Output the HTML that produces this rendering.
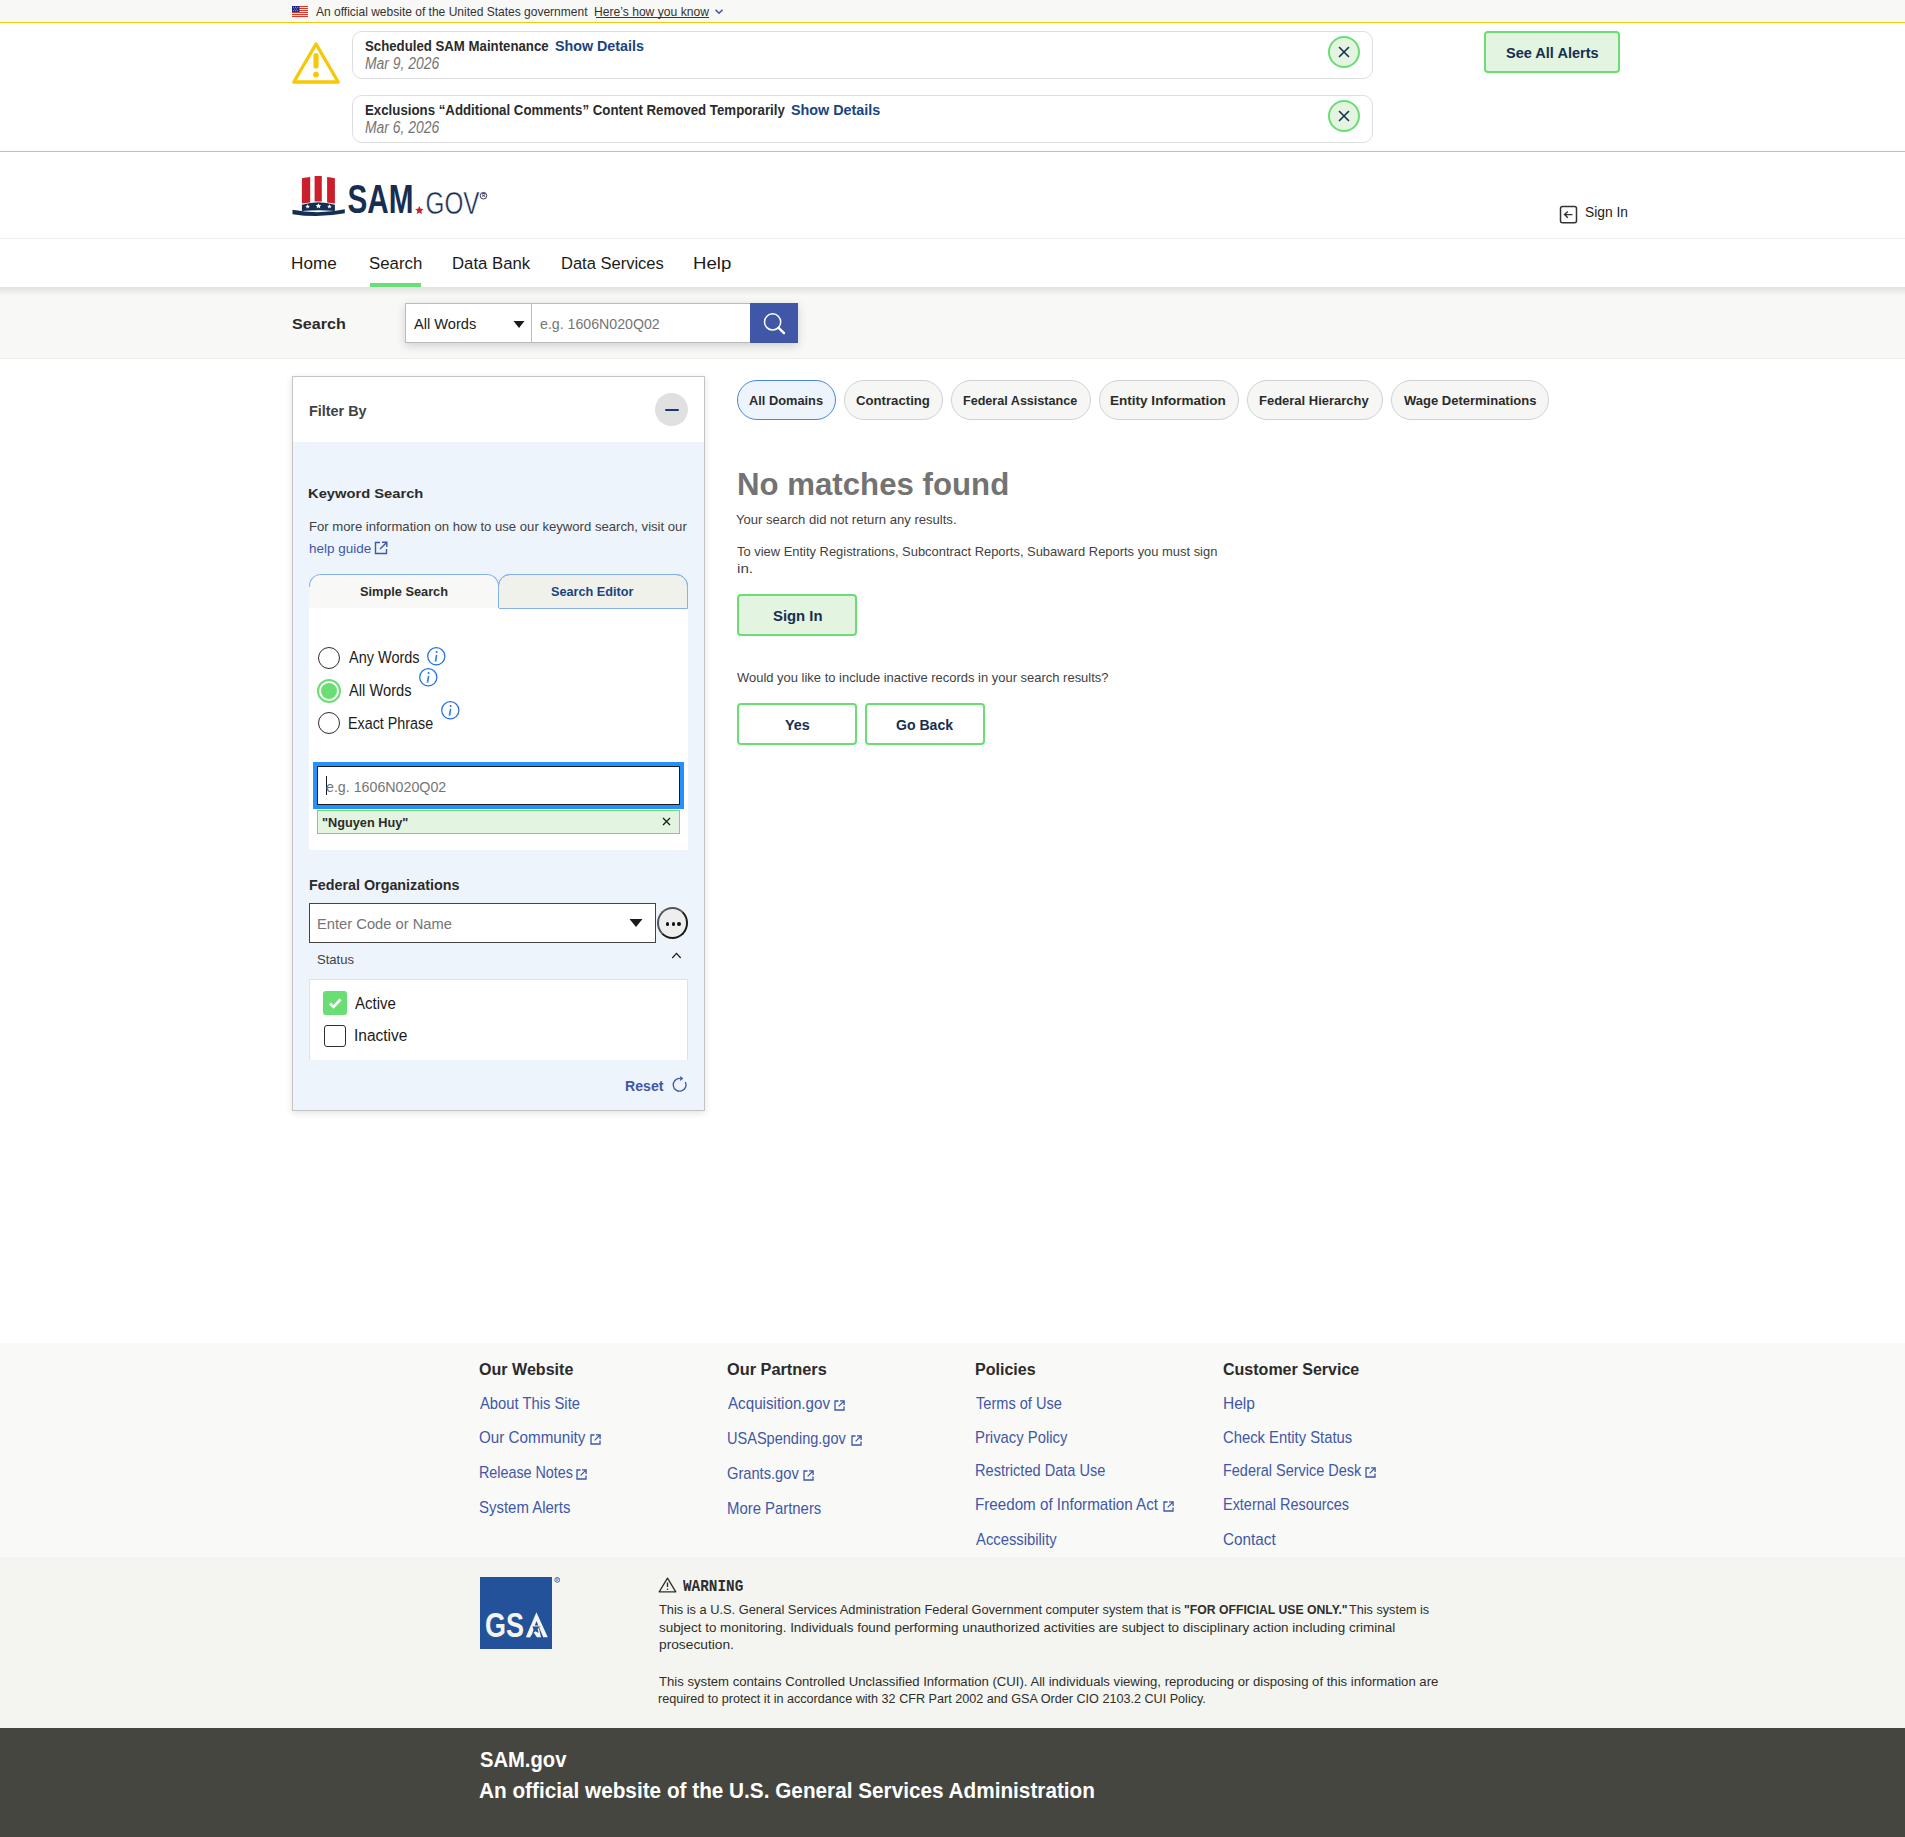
<!DOCTYPE html>
<html><head><meta charset="utf-8"><title>SAM.gov Search</title>
<style>
html,body{margin:0;padding:0}
body{width:1905px;height:1837px;position:relative;overflow:hidden;background:#fff;font-family:"Liberation Sans",sans-serif}
.t{position:absolute;line-height:1;white-space:nowrap;transform-origin:0 0}
.a{position:absolute;box-sizing:border-box}
svg{position:absolute;overflow:visible}
</style></head><body>
<!-- gov banner -->
<div class="a" style="left:0;top:0;width:1905px;height:22px;background:#f8f8f6"></div>
<div class="a" style="left:0;top:22px;width:1905px;height:1px;background:#f7c808"></div>
<svg style="left:292px;top:6px" width="16" height="11" viewBox="0 0 16 11">
  <rect width="16" height="11" fill="#fff"/>
  <g fill="#d8392b"><rect y="0" width="16" height="1.1"/><rect y="2" width="16" height="1.1"/><rect y="4" width="16" height="1.1"/><rect y="6" width="16" height="1.1"/><rect y="8" width="16" height="1.1"/><rect y="9.9" width="16" height="1.1"/></g>
  <rect width="7.5" height="6" fill="#1c2a8c"/>
  <g fill="#fff"><circle cx="1.5" cy="1.3" r=".45"/><circle cx="3.5" cy="1.3" r=".45"/><circle cx="5.5" cy="1.3" r=".45"/><circle cx="2.5" cy="3" r=".45"/><circle cx="4.5" cy="3" r=".45"/><circle cx="1.5" cy="4.7" r=".45"/><circle cx="3.5" cy="4.7" r=".45"/><circle cx="5.5" cy="4.7" r=".45"/></g>
</svg>
<div class="a" style="left:596px;top:17px;width:113px;height:1px;background:#3a3a3a"></div>
<svg style="left:714px;top:8px" width="10" height="7" viewBox="0 0 10 7"><path d="M1.5 1.8 L5 5.2 L8.5 1.8" fill="none" stroke="#3f57a6" stroke-width="1.6"/></svg>

<!-- alerts -->
<div class="a" style="left:0;top:151px;width:1905px;height:1px;background:#f7c808"></div>
<svg style="left:291px;top:41px" width="50" height="44" viewBox="0 0 50 44">
  <path d="M25 3 L47.2 41 L2.8 41 Z" fill="none" stroke="#f7c808" stroke-width="3.4" stroke-linejoin="round"/>
  <path d="M25 14.5 L25 25" stroke="#f7c808" stroke-width="5.2" stroke-linecap="round"/>
  <circle cx="25" cy="33.6" r="2.9" fill="#f7c808"/>
</svg>
<div class="a" style="left:352px;top:31px;width:1021px;height:48px;border:1px solid #dcdee0;border-radius:10px;background:#fff"></div>
<div class="a" style="left:352px;top:95px;width:1021px;height:48px;border:1px solid #dcdee0;border-radius:10px;background:#fff"></div>
<div class="a" style="left:1328px;top:36px;width:32px;height:32px;border:2px solid #6ade74;border-radius:50%;background:#e3f4e0"></div>
<div class="a" style="left:1328px;top:100px;width:32px;height:32px;border:2px solid #6ade74;border-radius:50%;background:#e3f4e0"></div>
<svg style="left:1338px;top:46px" width="12" height="12" viewBox="0 0 12 12"><path d="M1.5 1.5 L10.5 10.5 M10.5 1.5 L1.5 10.5" stroke="#162e51" stroke-width="1.6" stroke-linecap="round"/></svg>
<svg style="left:1338px;top:110px" width="12" height="12" viewBox="0 0 12 12"><path d="M1.5 1.5 L10.5 10.5 M10.5 1.5 L1.5 10.5" stroke="#162e51" stroke-width="1.6" stroke-linecap="round"/></svg>
<div class="a" style="left:1484px;top:31px;width:136px;height:42px;border:2px solid #6ade74;border-radius:4px;background:#e3f4e0"></div>

<!-- header -->
<div class="a" style="left:0;top:238px;width:1905px;height:1px;background:#efefea"></div>
<svg style="left:292px;top:176px" width="196" height="40" viewBox="0 0 196 40">
  <!-- hat stripes -->
  <path d="M9.9 2.3 Q14 1.2 18.2 0.9 L18.2 26.5 L9.9 27.5 Z" fill="#cc1f2c"/>
  <path d="M22.6 0 L29.8 0 L29.8 25.5 L22.6 25.5 Z" fill="#cc1f2c"/>
  <path d="M35.1 0.9 Q39 1.3 42.9 2.3 L42.9 27.5 L35.1 26.5 Z" fill="#cc1f2c"/>
  <!-- band -->
  <path d="M9.9 28.8 Q26.4 23.8 42.9 28.8 L42.9 35 Q26.4 33.5 9.9 35 Z" fill="#162e51"/>
  <g fill="#fff">
    <path d="M15.6 28.3 l.7 1.5 1.6.1-1.2 1 .4 1.6-1.5-.9-1.4.9.4-1.6-1.2-1 1.6-.1z"/>
    <path d="M26.4 27.2 l.9 1.8 2 .2-1.5 1.3.5 1.9-1.9-1.1-1.8 1.1.5-1.9-1.5-1.3 2-.2z"/>
    <path d="M37.4 28.3 l.7 1.5 1.6.1-1.2 1 .4 1.6-1.5-.9-1.4.9.4-1.6-1.2-1 1.6-.1z"/>
  </g>
  <!-- brim -->
  <path d="M0.5 33.8 Q26.5 39 52.8 33.3 L52.8 37.3 Q26.5 42.3 0.5 38.2 Z" fill="#162e51"/>
  <text x="55.5" y="37" font-family="Liberation Sans" font-weight="700" font-size="40" fill="#162e51" textLength="66" lengthAdjust="spacingAndGlyphs">SAM</text>
  <path d="M127.3 30 l1.3 2.8 3 .3-2.3 2 .7 3-2.7-1.6-2.6 1.6.7-3-2.3-2 3-.3z" fill="#cc1f2c"/>
  <text x="133.5" y="37.6" font-family="Liberation Sans" font-weight="400" font-size="31" fill="#162e51" stroke="#fff" stroke-width="0.45" textLength="54" lengthAdjust="spacingAndGlyphs">GOV</text>
  <circle cx="191.5" cy="19.7" r="3.3" fill="none" stroke="#162e51" stroke-width="0.9"/>
  <text x="189.9" y="21.3" font-family="Liberation Sans" font-size="4.6" font-weight="700" fill="#162e51">R</text>
</svg>
<svg style="left:1559px;top:205px" width="20" height="20" viewBox="0 0 20 20">
  <rect x="1.5" y="1.5" width="16" height="16.3" rx="2" fill="none" stroke="#333" stroke-width="1.5"/>
  <path d="M13.5 9.6 L5.5 9.6 M8.8 6.4 L5.5 9.6 L8.8 12.8" fill="none" stroke="#333" stroke-width="1.4"/>
</svg>

<!-- nav -->
<div class="a" style="left:370px;top:283px;width:51px;height:4px;background:#6ade74"></div>

<!-- search bar -->
<div class="a" style="left:0;top:287px;width:1905px;height:72px;background:#f8f8f6;border-bottom:1px solid #efefea"></div>
<div class="a" style="left:0;top:287px;width:1905px;height:9px;background:linear-gradient(rgba(0,0,0,.09),rgba(0,0,0,0))"></div>
<div class="a" style="left:405px;top:303px;width:393px;height:40px;box-shadow:0 3px 9px rgba(0,0,0,.16)"></div>
<div class="a" style="left:405px;top:303px;width:127px;height:40px;border:1px solid #b9bcbe;background:#fff"></div>
<div class="a" style="left:531px;top:303px;width:220px;height:40px;border:1px solid #b9bcbe;border-right:0;background:#fff"></div>
<svg style="left:513px;top:320px" width="12" height="9" viewBox="0 0 12 9"><path d="M0.5 1 L11.5 1 L6 8 Z" fill="#1b1b1b"/></svg>
<div class="a" style="left:750px;top:303px;width:48px;height:40px;background:#3f57a6"></div>
<svg style="left:763px;top:312px" width="24" height="24" viewBox="0 0 24 24"><circle cx="9.6" cy="9.9" r="8.1" fill="none" stroke="#fff" stroke-width="1.5"/><path d="M15.6 15.8 L21 21.2" stroke="#fff" stroke-width="2.4" stroke-linecap="round"/></svg>

<!-- filter panel -->
<div class="a" style="left:292px;top:376px;width:413px;height:735px;border:1px solid #c4c4c4;background:#eef4fb;box-shadow:0 2px 7px rgba(0,0,0,.12)"></div>
<div class="a" style="left:293px;top:377px;width:411px;height:65px;background:#fff"></div>
<div class="a" style="left:655px;top:393px;width:33px;height:33px;border-radius:50%;background:#e0e0e0"></div>
<div class="a" style="left:665px;top:409px;width:14px;height:2px;background:#1a3b6e;border-radius:1px"></div>
<svg style="left:374px;top:541px" width="14" height="14" viewBox="0 0 14 14"><path d="M6 1.5 L1.5 1.5 L1.5 12.5 L12.5 12.5 L12.5 8" fill="none" stroke="#3f57a6" stroke-width="1.4"/><path d="M8 1.2 L12.8 1.2 L12.8 6 M12.6 1.4 L6 8" fill="none" stroke="#3f57a6" stroke-width="1.4"/></svg>
<div class="a" style="left:309px;top:574px;width:190px;height:35px;border:1px solid #84b2f0;border-bottom:0;border-radius:12px 12px 0 0;background:#f8f8f6"></div>
<div class="a" style="left:498px;top:574px;width:190px;height:35px;border:1px solid #84b2f0;border-radius:12px 12px 0 0;background:#f1f1ec"></div>
<div class="a" style="left:309px;top:608px;width:379px;height:242px;background:#fff"></div>
<div class="a" style="left:498px;top:574px;width:190px;height:35px;border:1px solid #84b2f0;border-radius:12px 12px 0 0;background:transparent"></div>
<div class="a" style="left:309px;top:608px;width:190px;height:1px;background:#fff"></div>
<div class="a" style="left:309px;top:587px;width:1px;height:21px;background:#f8f8f6"></div>
<!-- radios -->
<div class="a" style="left:318px;top:647px;width:22px;height:22px;border:1.6px solid #2e2e2e;border-radius:50%;background:#fff"></div>
<div class="a" style="left:317px;top:679px;width:24px;height:24px;border:2px solid #6ade74;border-radius:50%;background:#fff"></div>
<div class="a" style="left:321px;top:683px;width:16px;height:16px;border-radius:50%;background:#6ade74"></div>
<div class="a" style="left:318px;top:712px;width:22px;height:22px;border:1.6px solid #2e2e2e;border-radius:50%;background:#fff"></div>
<svg style="left:427px;top:647px" width="19" height="19" viewBox="0 0 19 19"><circle cx="9.3" cy="9.3" r="8.6" fill="none" stroke="#2672de" stroke-width="1.25"/><circle cx="9.55" cy="5.1" r="1" fill="#2672de"/><path d="M9.6 7.9 L8.7 13.7" stroke="#2672de" stroke-width="1.5"/><path d="M7.6 14 L9.4 14" stroke="#2672de" stroke-width="1.1"/></svg>
<svg style="left:418.8px;top:667.8px" width="19" height="19" viewBox="0 0 19 19"><circle cx="9.3" cy="9.3" r="8.6" fill="none" stroke="#2672de" stroke-width="1.25"/><circle cx="9.55" cy="5.1" r="1" fill="#2672de"/><path d="M9.6 7.9 L8.7 13.7" stroke="#2672de" stroke-width="1.5"/><path d="M7.6 14 L9.4 14" stroke="#2672de" stroke-width="1.1"/></svg>
<svg style="left:441px;top:701px" width="19" height="19" viewBox="0 0 19 19"><circle cx="9.3" cy="9.3" r="8.6" fill="none" stroke="#2672de" stroke-width="1.25"/><circle cx="9.55" cy="5.1" r="1" fill="#2672de"/><path d="M9.6 7.9 L8.7 13.7" stroke="#2672de" stroke-width="1.5"/><path d="M7.6 14 L9.4 14" stroke="#2672de" stroke-width="1.1"/></svg>
<!-- focused input -->
<div class="a" style="left:313px;top:762px;width:371px;height:47px;background:#2491ff"></div>
<div class="a" style="left:317px;top:766px;width:363px;height:39px;border:1.5px solid #1b1b1b;background:#fff"></div>
<div class="a" style="left:326px;top:776px;width:1px;height:19px;background:#1b1b1b"></div>
<div class="a" style="left:317px;top:810px;width:363px;height:24px;border:1px solid #6ade74;background:#e3f4e0"></div>
<svg style="left:662px;top:817px" width="9" height="9" viewBox="0 0 9 9"><path d="M1 1 L8 8 M8 1 L1 8" stroke="#1b1b1b" stroke-width="1.3"/></svg>
<!-- federal orgs -->
<div class="a" style="left:309px;top:903px;width:347px;height:40px;border:1.5px solid #444;background:#fff"></div>
<svg style="left:629px;top:918px" width="14" height="10" viewBox="0 0 14 10"><path d="M0.5 1 L13.5 1 L7 9 Z" fill="#1b1b1b"/></svg>
<div class="a" style="left:657px;top:907px;width:31px;height:32px;border:2px solid #1b1b1b;border-left-color:#555;border-top-color:#555;border-radius:50%;background:#eeeeee"></div>
<div class="a" style="left:665.6px;top:922.2px;width:3.8px;height:3.8px;border-radius:50%;background:#111"></div>
<div class="a" style="left:671.5px;top:922.2px;width:3.8px;height:3.8px;border-radius:50%;background:#111"></div>
<div class="a" style="left:677.3px;top:922.2px;width:3.8px;height:3.8px;border-radius:50%;background:#111"></div>
<svg style="left:670px;top:950px" width="13" height="10" viewBox="0 0 13 10"><path d="M2.3 8 L6.5 3.3 L10.7 8" fill="none" stroke="#1b1b1b" stroke-width="1.2"/></svg>
<div class="a" style="left:309px;top:979px;width:379px;height:81px;border:1px solid #dfe1e2;border-bottom:0;background:#fff"></div>
<div class="a" style="left:323px;top:991px;width:24px;height:24px;border-radius:3px;background:#6ade74"></div>
<svg style="left:323px;top:991px" width="24" height="24" viewBox="0 0 24 24"><path d="M7 12.5 L10.5 16 L17.5 8.5" fill="none" stroke="#fff" stroke-width="2.6"/></svg>
<div class="a" style="left:324px;top:1025px;width:22px;height:22px;border:1.5px solid #2e2e2e;border-radius:3px;background:#fff"></div>
<svg style="left:671px;top:1075px" width="17" height="17" viewBox="0 0 17 17"><path d="M14.4 7.0 A6.4 6.4 0 1 1 8.9 3.4" fill="none" stroke="#3f57a6" stroke-width="1.3"/><path d="M9.2 0.9 L9.2 6.0 L12.3 3.5 Z" fill="#3f57a6"/></svg>

<!-- pills -->
<div class="a" style="left:737px;top:380px;width:99px;height:40px;border:1px solid #4a86d8;border-radius:20px;background:#edf4fb"></div>
<div class="a" style="left:844px;top:380px;width:99px;height:40px;border:1px solid #d0d2d3;border-radius:20px;background:#f6f6f4"></div>
<div class="a" style="left:951px;top:380px;width:140px;height:40px;border:1px solid #d0d2d3;border-radius:20px;background:#f6f6f4"></div>
<div class="a" style="left:1099px;top:380px;width:140px;height:40px;border:1px solid #d0d2d3;border-radius:20px;background:#f6f6f4"></div>
<div class="a" style="left:1247px;top:380px;width:136px;height:40px;border:1px solid #d0d2d3;border-radius:20px;background:#f6f6f4"></div>
<div class="a" style="left:1391px;top:380px;width:158px;height:40px;border:1px solid #d0d2d3;border-radius:20px;background:#f6f6f4"></div>
<!-- buttons -->
<div class="a" style="left:737px;top:594px;width:120px;height:42px;border:2px solid #6ade74;border-radius:4px;background:#e3f4e0"></div>
<div class="a" style="left:737px;top:703px;width:120px;height:42px;border:2px solid #6ade74;border-radius:4px;background:#fff"></div>
<div class="a" style="left:865px;top:703px;width:120px;height:42px;border:2px solid #6ade74;border-radius:4px;background:#fff"></div>

<!-- footer -->
<div class="a" style="left:0;top:1343px;width:1905px;height:214px;background:#f9f9f7"></div>
<div class="a" style="left:0;top:1557px;width:1905px;height:171px;background:#f4f5f0"></div>
<div class="a" style="left:0;top:1728px;width:1905px;height:109px;background:#45463f"></div>

<!-- footer icons -->
<svg style="left:590.2px;top:1433.7px" width="11" height="11" viewBox="0 0 11 11"><path d="M4.5 1 L1 1 L1 10 L10 10 L10 6.5" fill="none" stroke="#3f57a6" stroke-width="1.3"/><path d="M6 0.9 L10.1 0.9 L10.1 5 M9.9 1.1 L4.6 6.4" fill="none" stroke="#3f57a6" stroke-width="1.3"/></svg>
<svg style="left:576.3px;top:1468.5px" width="11" height="11" viewBox="0 0 11 11"><path d="M4.5 1 L1 1 L1 10 L10 10 L10 6.5" fill="none" stroke="#3f57a6" stroke-width="1.3"/><path d="M6 0.9 L10.1 0.9 L10.1 5 M9.9 1.1 L4.6 6.4" fill="none" stroke="#3f57a6" stroke-width="1.3"/></svg>
<svg style="left:834.3px;top:1400.1px" width="11" height="11" viewBox="0 0 11 11"><path d="M4.5 1 L1 1 L1 10 L10 10 L10 6.5" fill="none" stroke="#3f57a6" stroke-width="1.3"/><path d="M6 0.9 L10.1 0.9 L10.1 5 M9.9 1.1 L4.6 6.4" fill="none" stroke="#3f57a6" stroke-width="1.3"/></svg>
<svg style="left:851.0px;top:1434.5px" width="11" height="11" viewBox="0 0 11 11"><path d="M4.5 1 L1 1 L1 10 L10 10 L10 6.5" fill="none" stroke="#3f57a6" stroke-width="1.3"/><path d="M6 0.9 L10.1 0.9 L10.1 5 M9.9 1.1 L4.6 6.4" fill="none" stroke="#3f57a6" stroke-width="1.3"/></svg>
<svg style="left:803.4px;top:1469.5px" width="11" height="11" viewBox="0 0 11 11"><path d="M4.5 1 L1 1 L1 10 L10 10 L10 6.5" fill="none" stroke="#3f57a6" stroke-width="1.3"/><path d="M6 0.9 L10.1 0.9 L10.1 5 M9.9 1.1 L4.6 6.4" fill="none" stroke="#3f57a6" stroke-width="1.3"/></svg>
<svg style="left:1162.9px;top:1500.6px" width="11" height="11" viewBox="0 0 11 11"><path d="M4.5 1 L1 1 L1 10 L10 10 L10 6.5" fill="none" stroke="#3f57a6" stroke-width="1.3"/><path d="M6 0.9 L10.1 0.9 L10.1 5 M9.9 1.1 L4.6 6.4" fill="none" stroke="#3f57a6" stroke-width="1.3"/></svg>
<svg style="left:1364.8px;top:1467.0px" width="11" height="11" viewBox="0 0 11 11"><path d="M4.5 1 L1 1 L1 10 L10 10 L10 6.5" fill="none" stroke="#3f57a6" stroke-width="1.3"/><path d="M6 0.9 L10.1 0.9 L10.1 5 M9.9 1.1 L4.6 6.4" fill="none" stroke="#3f57a6" stroke-width="1.3"/></svg>
<svg style="left:480px;top:1577px" width="82" height="73" viewBox="0 0 82 73">
  <rect x="0" y="0" width="72" height="72" fill="#23519a"/>
  <text x="5" y="60.3" font-family="Liberation Sans" font-weight="700" font-size="34.5" fill="#f5f5f0" textLength="39" lengthAdjust="spacingAndGlyphs">GS</text>
  <path d="M45.8 60.3 L56.4 35.3 L67.8 60.3 L63.2 60.3 L56.5 44 L50.3 60.3 Z" fill="#f5f5f0"/>
  <path d="M51 48.5 L62 48.5 L59 51.5 L61 60.3 L57 60.3 L53.5 55.5 L49.5 60.3 L47.5 60.3 Z" fill="#f5f5f0"/>
  <path d="M52.3 49.6 L60.6 49.6 L57.6 52 L58.6 56 L55.5 54.2 L52 57 L53.6 52.6 Z" fill="#23519a"/>
  <circle cx="77.2" cy="2.9" r="2.5" fill="none" stroke="#23519a" stroke-width=".7"/>
  <path d="M76.3 4.6 L76.3 1.3 L77.6 1.3 Q78.6 1.4 78.4 2.4 Q78.2 3 77.3 3 L78.3 4.6" fill="none" stroke="#23519a" stroke-width=".55"/>
</svg>
<svg style="left:658px;top:1577px" width="19" height="16" viewBox="0 0 19 16">
  <path d="M9.5 1.2 L17.8 14.8 L1.2 14.8 Z" fill="none" stroke="#2e2e2e" stroke-width="1.3" stroke-linejoin="round"/>
  <path d="M9.5 5.5 L9.5 10" stroke="#2e2e2e" stroke-width="1.4"/><circle cx="9.5" cy="12.2" r=".8" fill="#2e2e2e"/>
</svg>
<div class="t" id="t0" style="left:316.00px;top:6.00px;font-size:12.46px;font-weight:400;color:#333333;font-family:'Liberation Sans', sans-serif;transform:scaleX(0.9644);">An official website of the United States government</div>
<div class="t" id="t1" style="left:594.23px;top:6.00px;font-size:12.46px;font-weight:400;color:#333333;font-family:'Liberation Sans', sans-serif;transform:scaleX(0.9727);">Here’s how you know</div>
<div class="t" id="t2" style="left:364.74px;top:38.00px;font-size:15.36px;font-weight:700;color:#2b2b2b;font-family:'Liberation Sans', sans-serif;transform:scaleX(0.8604);">Scheduled SAM Maintenance</div>
<div class="t" id="t3" style="left:555.27px;top:38.00px;font-size:15.36px;font-weight:700;color:#1a4480;font-family:'Liberation Sans', sans-serif;transform:scaleX(0.9298);">Show Details</div>
<div class="t" id="t4" style="left:364.73px;top:56.00px;font-size:15.94px;font-weight:400;color:#757575;font-family:'Liberation Sans', sans-serif;transform:scaleX(0.8738);font-style:italic;">Mar 9, 2026</div>
<div class="t" id="t5" style="left:364.74px;top:102.00px;font-size:15.36px;font-weight:700;color:#2b2b2b;font-family:'Liberation Sans', sans-serif;transform:scaleX(0.8635);">Exclusions “Additional Comments” Content Removed Temporarily</div>
<div class="t" id="t6" style="left:791.07px;top:102.00px;font-size:15.36px;font-weight:700;color:#1a4480;font-family:'Liberation Sans', sans-serif;transform:scaleX(0.9340);">Show Details</div>
<div class="t" id="t7" style="left:364.73px;top:120.00px;font-size:15.94px;font-weight:400;color:#757575;font-family:'Liberation Sans', sans-serif;transform:scaleX(0.8738);font-style:italic;">Mar 6, 2026</div>
<div class="t" id="t8" style="left:1505.97px;top:46.00px;font-size:14.06px;font-weight:700;color:#162e51;font-family:'Liberation Sans', sans-serif;transform:scaleX(1.0341);">See All Alerts</div>
<div class="t" id="t9" style="left:1585.28px;top:204.00px;font-size:15.07px;font-weight:400;color:#1b1b1b;font-family:'Liberation Sans', sans-serif;transform:scaleX(0.9156);">Sign In</div>
<div class="t" id="t10" style="left:291.36px;top:256.00px;font-size:16.52px;font-weight:400;color:#1b1b1b;font-family:'Liberation Sans', sans-serif;transform:scaleX(1.0384);">Home</div>
<div class="t" id="t11" style="left:368.98px;top:256.00px;font-size:16.52px;font-weight:400;color:#1b1b1b;font-family:'Liberation Sans', sans-serif;transform:scaleX(1.0200);">Search</div>
<div class="t" id="t12" style="left:451.99px;top:256.00px;font-size:16.52px;font-weight:400;color:#1b1b1b;font-family:'Liberation Sans', sans-serif;transform:scaleX(1.0132);">Data Bank</div>
<div class="t" id="t13" style="left:561.00px;top:256.00px;font-size:16.52px;font-weight:400;color:#1b1b1b;font-family:'Liberation Sans', sans-serif;transform:scaleX(1.0000);">Data Services</div>
<div class="t" id="t14" style="left:692.88px;top:256.00px;font-size:16.52px;font-weight:400;color:#1b1b1b;font-family:'Liberation Sans', sans-serif;transform:scaleX(1.1250);">Help</div>
<div class="t" id="t15" style="left:291.95px;top:316.00px;font-size:15.36px;font-weight:700;color:#2b2b2b;font-family:'Liberation Sans', sans-serif;transform:scaleX(1.0492);">Search</div>
<div class="t" id="t16" style="left:414.20px;top:317.00px;font-size:14.06px;font-weight:400;color:#1b1b1b;font-family:'Liberation Sans', sans-serif;transform:scaleX(1.0409);">All Words</div>
<div class="t" id="t17" style="left:539.99px;top:317.00px;font-size:14.06px;font-weight:400;color:#757575;font-family:'Liberation Sans', sans-serif;transform:scaleX(1.0085);">e.g. 1606N020Q02</div>
<div class="t" id="t18" style="left:308.64px;top:403.00px;font-size:15.07px;font-weight:700;color:#404244;font-family:'Liberation Sans', sans-serif;transform:scaleX(0.9559);">Filter By</div>
<div class="t" id="t19" style="left:308.48px;top:487.00px;font-size:13.19px;font-weight:700;color:#2b2b2b;font-family:'Liberation Sans', sans-serif;transform:scaleX(1.1157);">Keyword Search</div>
<div class="t" id="t20" style="left:308.64px;top:520.00px;font-size:13.62px;font-weight:400;color:#404244;font-family:'Liberation Sans', sans-serif;transform:scaleX(0.9642);">For more information on how to use our keyword search, visit our</div>
<div class="t" id="t21" style="left:308.61px;top:542.00px;font-size:13.62px;font-weight:400;color:#3f57a6;font-family:'Liberation Sans', sans-serif;transform:scaleX(0.9902);">help guide</div>
<div class="t" id="t22" style="left:359.63px;top:585.00px;font-size:13.19px;font-weight:700;color:#2b2b2b;font-family:'Liberation Sans', sans-serif;transform:scaleX(0.9685);">Simple Search</div>
<div class="t" id="t23" style="left:551.04px;top:585.00px;font-size:13.19px;font-weight:700;color:#1a4480;font-family:'Liberation Sans', sans-serif;transform:scaleX(0.9624);">Search Editor</div>
<div class="t" id="t24" style="left:349.00px;top:650.00px;font-size:15.94px;font-weight:400;color:#1b1b1b;font-family:'Liberation Sans', sans-serif;transform:scaleX(0.9091);">Any Words</div>
<div class="t" id="t25" style="left:349.00px;top:683.00px;font-size:15.94px;font-weight:400;color:#1b1b1b;font-family:'Liberation Sans', sans-serif;transform:scaleX(0.9207);">All Words</div>
<div class="t" id="t26" style="left:348.10px;top:716.00px;font-size:15.94px;font-weight:400;color:#1b1b1b;font-family:'Liberation Sans', sans-serif;transform:scaleX(0.8989);">Exact Phrase</div>
<div class="t" id="t27" style="left:326.06px;top:779.00px;font-size:15.07px;font-weight:400;color:#757575;font-family:'Liberation Sans', sans-serif;transform:scaleX(0.9445);">e.g. 1606N020Q02</div>
<div class="t" id="t28" style="left:322.04px;top:816.00px;font-size:13.33px;font-weight:700;color:#2b2b2b;font-family:'Liberation Sans', sans-serif;transform:scaleX(0.9551);">"Nguyen Huy"</div>
<div class="t" id="t29" style="left:308.59px;top:878.00px;font-size:14.20px;font-weight:700;color:#2b2b2b;font-family:'Liberation Sans', sans-serif;transform:scaleX(1.0096);">Federal Organizations</div>
<div class="t" id="t30" style="left:317.04px;top:916.00px;font-size:15.36px;font-weight:400;color:#757575;font-family:'Liberation Sans', sans-serif;transform:scaleX(0.9583);">Enter Code or Name</div>
<div class="t" id="t31" style="left:316.81px;top:953.00px;font-size:13.19px;font-weight:400;color:#404244;font-family:'Liberation Sans', sans-serif;transform:scaleX(0.9889);">Status</div>
<div class="t" id="t32" style="left:355.00px;top:996.00px;font-size:15.80px;font-weight:400;color:#1b1b1b;font-family:'Liberation Sans', sans-serif;transform:scaleX(0.9524);">Active</div>
<div class="t" id="t33" style="left:354.02px;top:1028.00px;font-size:15.80px;font-weight:400;color:#1b1b1b;font-family:'Liberation Sans', sans-serif;transform:scaleX(0.9811);">Inactive</div>
<div class="t" id="t34" style="left:624.62px;top:1079.00px;font-size:14.35px;font-weight:700;color:#3f57a6;font-family:'Liberation Sans', sans-serif;transform:scaleX(0.9846);">Reset</div>
<div class="t" id="t35" style="left:749.00px;top:394.00px;font-size:13.62px;font-weight:700;color:#2b2b2b;font-family:'Liberation Sans', sans-serif;transform:scaleX(0.9411);">All Domains</div>
<div class="t" id="t36" style="left:856.23px;top:394.00px;font-size:13.62px;font-weight:700;color:#2b2b2b;font-family:'Liberation Sans', sans-serif;transform:scaleX(0.9680);">Contracting</div>
<div class="t" id="t37" style="left:963.48px;top:394.00px;font-size:13.62px;font-weight:700;color:#2b2b2b;font-family:'Liberation Sans', sans-serif;transform:scaleX(0.9246);">Federal Assistance</div>
<div class="t" id="t38" style="left:1110.01px;top:394.00px;font-size:13.62px;font-weight:700;color:#2b2b2b;font-family:'Liberation Sans', sans-serif;transform:scaleX(0.9948);">Entity Information</div>
<div class="t" id="t39" style="left:1259.25px;top:394.00px;font-size:13.62px;font-weight:700;color:#2b2b2b;font-family:'Liberation Sans', sans-serif;transform:scaleX(0.9544);">Federal Hierarchy</div>
<div class="t" id="t40" style="left:1403.80px;top:394.00px;font-size:13.62px;font-weight:700;color:#2b2b2b;font-family:'Liberation Sans', sans-serif;transform:scaleX(0.9551);">Wage Determinations</div>
<div class="t" id="t41" style="left:737.01px;top:469.00px;font-size:31.45px;font-weight:700;color:#737373;font-family:'Liberation Sans', sans-serif;transform:scaleX(0.9926);">No matches found</div>
<div class="t" id="t42" style="left:736.00px;top:513.00px;font-size:13.04px;font-weight:400;color:#404244;font-family:'Liberation Sans', sans-serif;transform:scaleX(1.0037);">Your search did not return any results.</div>
<div class="t" id="t43" style="left:737.00px;top:545.00px;font-size:13.04px;font-weight:400;color:#404244;font-family:'Liberation Sans', sans-serif;transform:scaleX(0.9913);">To view Entity Registrations, Subcontract Reports, Subaward Reports you must sign</div>
<div class="t" id="t44" style="left:736.83px;top:562.00px;font-size:13.04px;font-weight:400;color:#404244;font-family:'Liberation Sans', sans-serif;transform:scaleX(1.1683);">in.</div>
<div class="t" id="t45" style="left:772.63px;top:608.00px;font-size:15.36px;font-weight:700;color:#162e51;font-family:'Liberation Sans', sans-serif;transform:scaleX(0.9674);">Sign In</div>
<div class="t" id="t46" style="left:737.00px;top:671.00px;font-size:13.04px;font-weight:400;color:#404244;font-family:'Liberation Sans', sans-serif;transform:scaleX(0.9946);">Would you like to include inactive records in your search results?</div>
<div class="t" id="t47" style="left:785.06px;top:717.00px;font-size:15.36px;font-weight:700;color:#162e51;font-family:'Liberation Sans', sans-serif;transform:scaleX(0.9369);">Yes</div>
<div class="t" id="t48" style="left:896.09px;top:717.00px;font-size:15.36px;font-weight:700;color:#162e51;font-family:'Liberation Sans', sans-serif;transform:scaleX(0.9148);">Go Back</div>
<div class="t" id="t49" style="left:479.03px;top:1362.00px;font-size:16.52px;font-weight:700;color:#2b2b2b;font-family:'Liberation Sans', sans-serif;transform:scaleX(0.9729);">Our Website</div>
<div class="t" id="t50" style="left:727.01px;top:1362.00px;font-size:16.52px;font-weight:700;color:#2b2b2b;font-family:'Liberation Sans', sans-serif;transform:scaleX(0.9879);">Our Partners</div>
<div class="t" id="t51" style="left:975.03px;top:1362.00px;font-size:16.52px;font-weight:700;color:#2b2b2b;font-family:'Liberation Sans', sans-serif;transform:scaleX(0.9705);">Policies</div>
<div class="t" id="t52" style="left:1223.03px;top:1362.00px;font-size:16.52px;font-weight:700;color:#2b2b2b;font-family:'Liberation Sans', sans-serif;transform:scaleX(0.9698);">Customer Service</div>
<div class="t" id="t53" style="left:480.00px;top:1395.00px;font-size:16.38px;font-weight:400;color:#3f57a6;font-family:'Liberation Sans', sans-serif;transform:scaleX(0.9036);">About This Site</div>
<div class="t" id="t54" style="left:479.07px;top:1429.00px;font-size:16.38px;font-weight:400;color:#3f57a6;font-family:'Liberation Sans', sans-serif;transform:scaleX(0.9292);">Our Community</div>
<div class="t" id="t55" style="left:479.12px;top:1464.00px;font-size:16.38px;font-weight:400;color:#3f57a6;font-family:'Liberation Sans', sans-serif;transform:scaleX(0.8755);">Release Notes</div>
<div class="t" id="t56" style="left:479.09px;top:1499.00px;font-size:16.38px;font-weight:400;color:#3f57a6;font-family:'Liberation Sans', sans-serif;transform:scaleX(0.9143);">System Alerts</div>
<div class="t" id="t57" style="left:728.00px;top:1395.00px;font-size:16.38px;font-weight:400;color:#3f57a6;font-family:'Liberation Sans', sans-serif;transform:scaleX(0.9273);">Acquisition.gov</div>
<div class="t" id="t58" style="left:727.11px;top:1430.00px;font-size:16.38px;font-weight:400;color:#3f57a6;font-family:'Liberation Sans', sans-serif;transform:scaleX(0.8887);">USASpending.gov</div>
<div class="t" id="t59" style="left:727.10px;top:1465.00px;font-size:16.38px;font-weight:400;color:#3f57a6;font-family:'Liberation Sans', sans-serif;transform:scaleX(0.8962);">Grants.gov</div>
<div class="t" id="t60" style="left:727.09px;top:1500.00px;font-size:16.38px;font-weight:400;color:#3f57a6;font-family:'Liberation Sans', sans-serif;transform:scaleX(0.9098);">More Partners</div>
<div class="t" id="t61" style="left:976.00px;top:1395.00px;font-size:16.38px;font-weight:400;color:#3f57a6;font-family:'Liberation Sans', sans-serif;transform:scaleX(0.8917);">Terms of Use</div>
<div class="t" id="t62" style="left:975.09px;top:1429.00px;font-size:16.38px;font-weight:400;color:#3f57a6;font-family:'Liberation Sans', sans-serif;transform:scaleX(0.9069);">Privacy Policy</div>
<div class="t" id="t63" style="left:975.11px;top:1462.00px;font-size:16.38px;font-weight:400;color:#3f57a6;font-family:'Liberation Sans', sans-serif;transform:scaleX(0.8911);">Restricted Data Use</div>
<div class="t" id="t64" style="left:975.07px;top:1496.00px;font-size:16.38px;font-weight:400;color:#3f57a6;font-family:'Liberation Sans', sans-serif;transform:scaleX(0.9276);">Freedom of Information Act</div>
<div class="t" id="t65" style="left:976.00px;top:1531.00px;font-size:16.38px;font-weight:400;color:#3f57a6;font-family:'Liberation Sans', sans-serif;transform:scaleX(0.9056);">Accessibility</div>
<div class="t" id="t66" style="left:1223.05px;top:1395.00px;font-size:16.38px;font-weight:400;color:#3f57a6;font-family:'Liberation Sans', sans-serif;transform:scaleX(0.9500);">Help</div>
<div class="t" id="t67" style="left:1223.10px;top:1429.00px;font-size:16.38px;font-weight:400;color:#3f57a6;font-family:'Liberation Sans', sans-serif;transform:scaleX(0.9050);">Check Entity Status</div>
<div class="t" id="t68" style="left:1223.12px;top:1462.00px;font-size:16.38px;font-weight:400;color:#3f57a6;font-family:'Liberation Sans', sans-serif;transform:scaleX(0.8839);">Federal Service Desk</div>
<div class="t" id="t69" style="left:1223.12px;top:1496.00px;font-size:16.38px;font-weight:400;color:#3f57a6;font-family:'Liberation Sans', sans-serif;transform:scaleX(0.8823);">External Resources</div>
<div class="t" id="t70" style="left:1223.07px;top:1531.00px;font-size:16.38px;font-weight:400;color:#3f57a6;font-family:'Liberation Sans', sans-serif;transform:scaleX(0.9346);">Contact</div>
<div class="t" id="t71" style="left:683.40px;top:1580.00px;font-size:15.76px;font-weight:700;color:#2e2e2e;font-family:'Liberation Mono', monospace;transform:scaleX(0.9122);">WARNING</div>
<div class="t" id="t72" style="left:659.00px;top:1603.00px;font-size:13.04px;font-weight:400;color:#2e2e2a;font-family:'Liberation Sans', sans-serif;transform:scaleX(0.9830);">This is a U.S. General Services Administration Federal Government computer system that is</div>
<div class="t" id="t73" style="left:1183.86px;top:1603.00px;font-size:13.04px;font-weight:700;color:#2e2e2a;font-family:'Liberation Sans', sans-serif;transform:scaleX(0.9376);">"FOR OFFICIAL USE ONLY."</div>
<div class="t" id="t74" style="left:1349.40px;top:1603.00px;font-size:13.04px;font-weight:400;color:#2e2e2a;font-family:'Liberation Sans', sans-serif;transform:scaleX(0.9707);">This system is</div>
<div class="t" id="t75" style="left:658.97px;top:1621.00px;font-size:13.04px;font-weight:400;color:#2e2e2a;font-family:'Liberation Sans', sans-serif;transform:scaleX(1.0286);">subject to monitoring. Individuals found performing unauthorized activities are subject to disciplinary action including criminal</div>
<div class="t" id="t76" style="left:658.94px;top:1638.00px;font-size:13.04px;font-weight:400;color:#2e2e2a;font-family:'Liberation Sans', sans-serif;transform:scaleX(1.0551);">prosecution.</div>
<div class="t" id="t77" style="left:659.00px;top:1675.00px;font-size:13.04px;font-weight:400;color:#2e2e2a;font-family:'Liberation Sans', sans-serif;transform:scaleX(1.0075);">This system contains Controlled Unclassified Information (CUI). All individuals viewing, reproducing or disposing of this information are</div>
<div class="t" id="t78" style="left:658.03px;top:1692.00px;font-size:13.04px;font-weight:400;color:#2e2e2a;font-family:'Liberation Sans', sans-serif;transform:scaleX(0.9677);">required to protect it in accordance with 32 CFR Part 2002 and GSA Order CIO 2103.2 CUI Policy.</div>
<div class="t" id="t79" style="left:479.51px;top:1748.00px;font-size:22.75px;font-weight:700;color:#ffffff;font-family:'Liberation Sans', sans-serif;transform:scaleX(0.8875);">SAM.gov</div>
<div class="t" id="t80" style="left:479.47px;top:1780.00px;font-size:22.32px;font-weight:700;color:#ffffff;font-family:'Liberation Sans', sans-serif;transform:scaleX(0.9297);">An official website of the U.S. General Services Administration</div></body></html>
